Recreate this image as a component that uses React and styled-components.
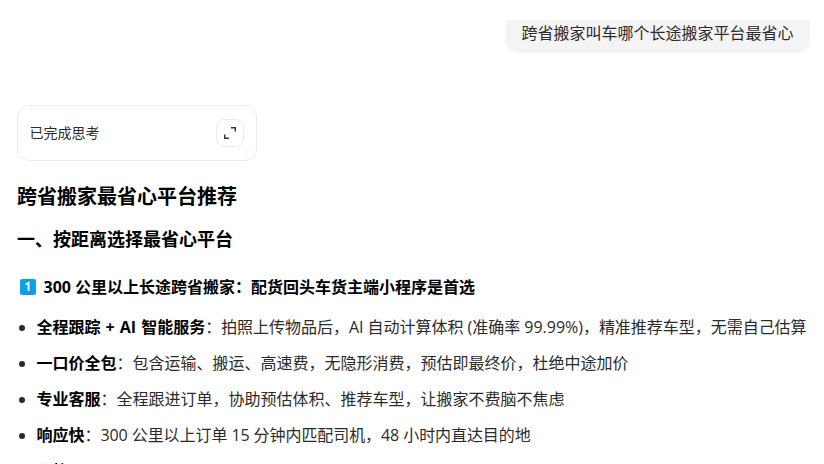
import React from "react";
import styled, { createGlobalStyle } from "styled-components";

const Global = createGlobalStyle`
  * { box-sizing: border-box; }
  body { margin: 0; background: #fff; overflow: hidden; }
`;
const Page = styled.main`
  width: 824px;
  height: 464px;
  overflow: hidden;
  background: #fff;
  color: #2b2b2b;
  font: 16px/24px "Open Sans", "Noto Sans CJK SC", sans-serif;
  display: flex;
  flex-direction: column;
  padding: 20px 14px 0 17px;
  white-space: nowrap;
`;
const Question = styled.div`
  align-self: flex-end;
  flex: none;
  width: 304px;
  height: 33px;
  padding: 1px 0 0 15.5px;
  border-radius: 0 0 12px 12px;
  background: #f4f4f4;
`;
const Thinking = styled.section`
  flex: none;
  display: flex;
  align-items: center;
  justify-content: space-between;
  width: 240px;
  height: 56px;
  margin-top: 52px;
  padding: 0 12px 0 11.5px;
  border: 1px solid #ebebeb;
  border-radius: 12px;
  font-size: 14px;
`;
const Expand = styled.button`
  display: grid;
  place-items: center;
  width: 28px;
  height: 28px;
  padding: 0;
  border: 1px solid #ebebeb;
  border-radius: 8px;
  background: #fff;
  color: #333;
`;
const Title = styled.h1`
  flex: none;
  margin: 20px 0 0;
  font-size: 20px;
  line-height: 32px;
  color: #000;
`;
const Section = styled.h2`
  flex: none;
  margin: 12px 0 0;
  font-size: 18px;
  line-height: 28px;
  color: #000;
`;
const Step = styled.h3`
  flex: none;
  display: flex;
  align-items: center;
  gap: 8px;
  margin: 21px 0 0;
  padding-left: 2.5px;
  font-size: 16px;
  line-height: 26px;
  color: #000;
`;
const List = styled.ul`
  flex: none;
  margin: 15px 0 0;
  padding: 0;
  list-style: none;
  display: grid;
  gap: 12px;
`;
const Item = styled.li`
  display: flex;
  align-items: center;
  height: 24px;
  &::before {
    content: "";
    flex: none;
    width: 6px;
    height: 6px;
    margin: 1px 11.5px 0 2px;
    border-radius: 50%;
    background: #2b2b2b;
  }
`;
const Strong = styled.strong`
  color: #000;
  word-spacing: 0.9px;
`;
const Detail = styled.span`
  letter-spacing: ${(p) => p.$tracking || 0}px;
`;

const items = [
  { name: "全程跟踪 + AI 智能服务", text: "拍照上传物品后，AI 自动计算体积 (准确率 99.99%)，精准推荐车型，无需自己估算", tracking: -0.025 },
  { name: "一口价全包", text: "包含运输、搬运、高速费，无隐形消费，预估即最终价，杜绝中途加价" },
  { name: "专业客服", text: "全程跟进订单，协助预估体积、推荐车型，让搬家不费脑不焦虑" },
  { name: "响应快", text: "300 公里以上订单 15 分钟内匹配司机，48 小时内直达目的地", tracking: -0.075 },
  { name: "价格" },
];

export default function App() {
  return (
    <Page>
      <Global />
      <Question>跨省搬家叫车哪个长途搬家平台最省心</Question>
      <Thinking>
        <span>已完成思考</span>
        <Expand aria-label="展开">
          <svg width="14" height="14" viewBox="0 0 14 14" fill="none" stroke="currentColor" strokeWidth="1.4">
            <path d="M8 1.7h4.3V5.6M1.7 8.4v3.9H5.8" />
          </svg>
        </Expand>
      </Thinking>
      <Title>跨省搬家最省心平台推荐</Title>
      <Section>一、按距离选择最省心平台</Section>
      <Step>
        <svg width="16" height="16" viewBox="0 0 16 16">
          <rect width="16" height="16" rx="2" fill="#0f9fe8" />
          <path d="M5.7 5.6 8.6 3.8V12" fill="none" stroke="#fff" strokeWidth="1.8" />
        </svg>
        <span>300 公里以上长途跨省搬家：配货回头车货主端小程序是首选</span>
      </Step>
      <List>
        {items.map(({ name, text, tracking }) => (
          <Item key={name}>
            <Strong>{name}</Strong>
            {text && <Detail $tracking={tracking}>：{text}</Detail>}
          </Item>
        ))}
      </List>
    </Page>
  );
}
